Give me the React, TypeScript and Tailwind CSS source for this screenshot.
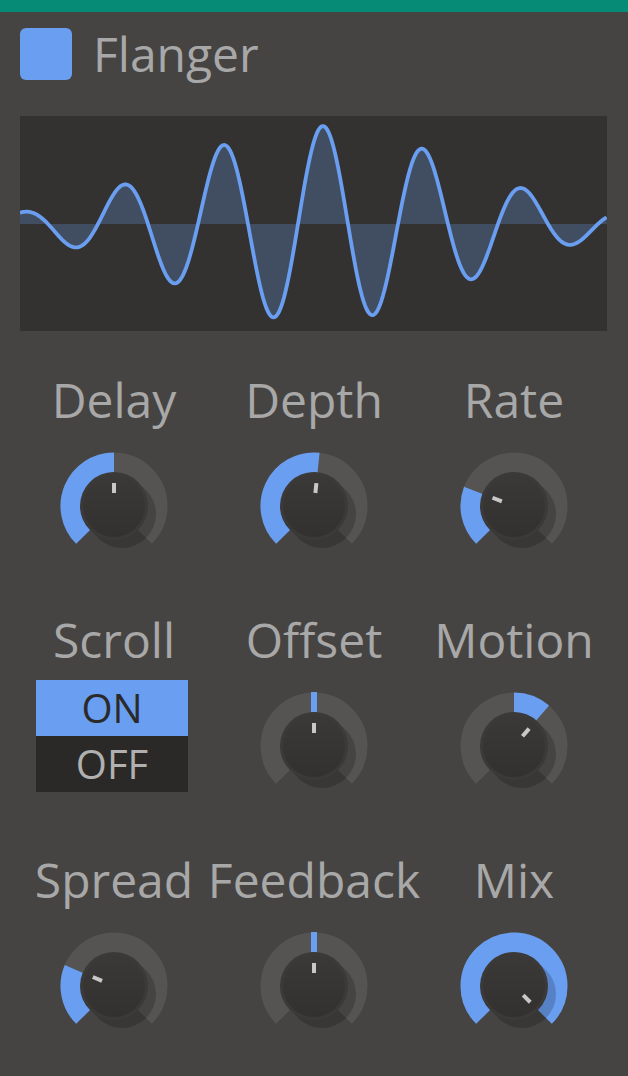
import React from 'react';

const BLUE = '#6a9ef0';
const RING = '#555452';

// point on a circle, angle in degrees measured clockwise from 12 o'clock
const pt = (cx: number, cy: number, r: number, deg: number) => {
  const a = (deg * Math.PI) / 180;
  return [cx + r * Math.sin(a), cy - r * Math.cos(a)];
};

const arc = (cx: number, cy: number, r: number, a1: number, a2: number) => {
  const [x1, y1] = pt(cx, cy, r, a1);
  const [x2, y2] = pt(cx, cy, r, a2);
  const large = a2 - a1 > 180 ? 1 : 0;
  return `M ${x1} ${y1} A ${r} ${r} 0 ${large} 1 ${x2} ${y2}`;
};

function Knob({ angle, bipolar = false }: { angle: number; bipolar?: boolean }) {
  const c = 60;
  const start = bipolar ? Math.min(0, angle) : -135;
  const end = bipolar ? Math.max(0, angle) : angle;
  const [ix1, iy1] = pt(c, c, 13, angle);
  const [ix2, iy2] = pt(c, c, 23, angle);
  const [bx1, by1] = pt(c, c, 34, 0);
  const [bx2, by2] = pt(c, c, 54, 0);
  return (
    <svg width="120" height="120" viewBox="0 0 120 120" className="mt-[23px] block">
      <defs>
        <linearGradient id="face" x1="0" y1="0" x2="0" y2="1">
          <stop offset="0" stopColor="#3a3938" />
          <stop offset="1" stopColor="#323130" />
        </linearGradient>
      </defs>
      <path d={arc(c, c, 43.5, -135, 135)} stroke={RING} strokeWidth="20" fill="none" />
      {end - start > 1 && (
        <path d={arc(c, c, 43.5, start, end)} stroke={BLUE} strokeWidth="20" fill="none" />
      )}
      {bipolar && end - start <= 1 && (
        <line x1={bx1} y1={by1} x2={bx2} y2={by2} stroke={BLUE} strokeWidth="6" />
      )}
      <circle cx={c + 8} cy={c + 8} r="34" fill="#000" opacity="0.18" />
      <circle cx={c} cy={c} r="34" fill="#3b3a39" />
      <circle cx={c} cy={c} r="31" fill="url(#face)" />
      <line x1={ix1} y1={iy1} x2={ix2} y2={iy2} stroke="#c8c8c8" strokeWidth="4" />
    </svg>
  );
}

function Wave() {
  const w = 587;
  const h = 215;
  const mid = 108;
  const pts: string[] = [];
  for (let x = 0; x <= w; x += 1.5) {
    const sx = x + 20;
    const env = 98 * Math.exp(-((sx - 318) ** 2) / (2 * 144 * 144));
    const y = mid - env * Math.cos((2 * Math.PI * (sx - 323)) / 100);
    pts.push(`${x.toFixed(1)} ${y.toFixed(2)}`);
  }
  const line = 'M ' + pts.join(' L ');
  const fill = `M 0 ${mid} L ` + pts.join(' L ') + ` L ${w} ${mid} Z`;
  return (
    <svg width={w} height={h} viewBox={`0 0 ${w} ${h}`} className="block">
      <path d={fill} fill="rgba(106,158,240,0.25)" />
      <path d={line} stroke={BLUE} strokeWidth="3.8" fill="none" strokeLinejoin="round" />
    </svg>
  );
}

function Label({ children }: { children: React.ReactNode }) {
  return <div className="text-[48px] leading-[46px] text-[#a8a8a8] whitespace-nowrap">{children}</div>;
}

function Cell({ label, children }: { label: string; children: React.ReactNode }) {
  return (
    <div className="flex flex-col items-center h-[240px]">
      <Label>{label}</Label>
      {children}
    </div>
  );
}

export default function App() {
  return (
    <div className="w-[628px] h-[1076px] overflow-hidden bg-[#464442] font-['Open_Sans',sans-serif]">
      <div className="h-[12px] bg-[#068b77]" />
      <div className="flex items-center gap-[21px] pl-[20px] pt-[16px]">
        <div className="w-[52px] h-[52px] rounded-[6px] bg-[#6a9ef0]" />
        <div className="text-[48px] leading-[46px] text-[#a8a8a8]">Flanger</div>
      </div>
      <div className="mt-[36px] ml-[20px] w-[587px] h-[215px] bg-[#333231]">
        <Wave />
      </div>
      <div className="mt-[46px] px-[14px] grid grid-cols-3">
        <Cell label="Delay">
          <Knob angle={0} />
        </Cell>
        <Cell label="Depth">
          <Knob angle={6} />
        </Cell>
        <Cell label="Rate">
          <Knob angle={-69} />
        </Cell>

        <Cell label="Scroll">
          <div className="mt-[17px] mr-[4px] w-[152px] text-center text-[40px] leading-[56px]">
            <div className="h-[56px] bg-[#6a9ef0] text-[#2a2a2a]">ON</div>
            <div className="h-[56px] bg-[#2a2928] text-[#b0b0b0]">OFF</div>
          </div>
        </Cell>
        <Cell label="Offset">
          <Knob angle={0} bipolar />
        </Cell>
        <Cell label="Motion">
          <Knob angle={41} bipolar />
        </Cell>

        <Cell label="Spread">
          <Knob angle={-67} />
        </Cell>
        <Cell label="Feedback">
          <Knob angle={0} bipolar />
        </Cell>
        <Cell label="Mix">
          <Knob angle={135} />
        </Cell>
      </div>
    </div>
  );
}
